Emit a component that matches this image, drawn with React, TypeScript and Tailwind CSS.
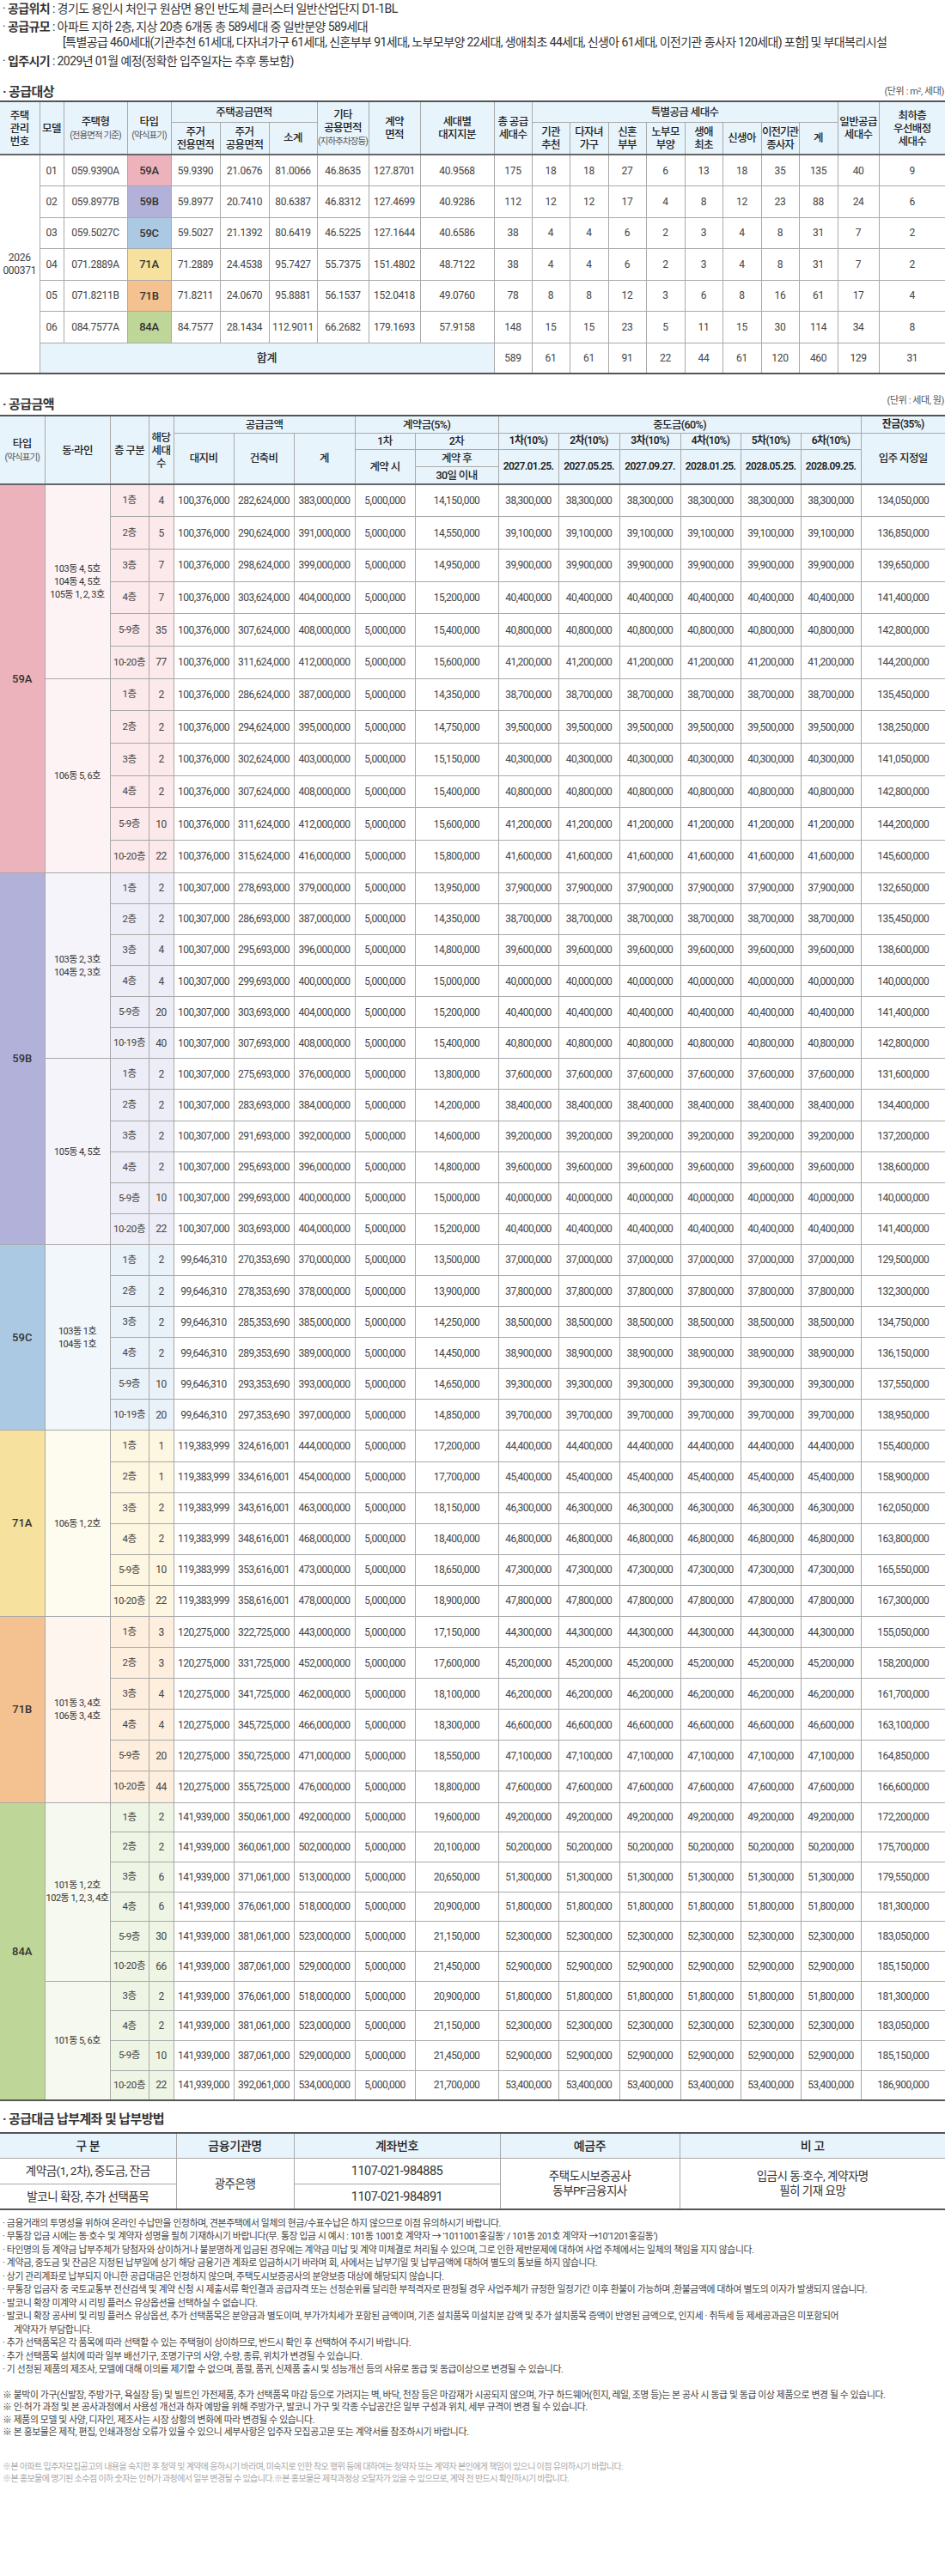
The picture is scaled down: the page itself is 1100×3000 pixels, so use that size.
import React from 'react';

type Row = [string, number, number];
type Group = { dong: string[]; rows: Row[] };
type TypeBlock = {
  type: string;
  land: number;
  strong: string;
  light: string;
  mid: string;
  rowH: string;
  groups: Group[];
};

const prices: TypeBlock[] = [
  {
    type: '59A',
    land: 100376000,
    strong: 'bg-[#ecb3bc]',
    light: 'bg-[#fdf3f4]',
    mid: 'bg-[#fbe9eb]',
    rowH: 'h-[37.7px]',
    groups: [
      {
        dong: ['103동 4, 5호', '104동 4, 5호', '105동 1, 2, 3호'],
        rows: [['1층', 4, 383], ['2층', 5, 391], ['3층', 7, 399], ['4층', 7, 404], ['5-9층', 35, 408], ['10-20층', 77, 412]],
      },
      {
        dong: ['106동 5, 6호'],
        rows: [['1층', 2, 387], ['2층', 2, 395], ['3층', 2, 403], ['4층', 2, 408], ['5-9층', 10, 412], ['10-20층', 22, 416]],
      },
    ],
  },
  {
    type: '59B',
    land: 100307000,
    strong: 'bg-[#b2b1da]',
    light: 'bg-[#f5f4fb]',
    mid: 'bg-[#ededf7]',
    rowH: 'h-[36.1px]',
    groups: [
      {
        dong: ['103동 2, 3호', '104동 2, 3호'],
        rows: [['1층', 2, 379], ['2층', 2, 387], ['3층', 4, 396], ['4층', 4, 400], ['5-9층', 20, 404], ['10-19층', 40, 408]],
      },
      {
        dong: ['105동 4, 5호'],
        rows: [['1층', 2, 376], ['2층', 2, 384], ['3층', 2, 392], ['4층', 2, 396], ['5-9층', 10, 400], ['10-20층', 22, 404]],
      },
    ],
  },
  {
    type: '59C',
    land: 99646310,
    strong: 'bg-[#acc9e3]',
    light: 'bg-[#f2f7fc]',
    mid: 'bg-[#e9f1f9]',
    rowH: 'h-[36.1px]',
    groups: [
      {
        dong: ['103동 1호', '104동 1호'],
        rows: [['1층', 2, 370], ['2층', 2, 378], ['3층', 2, 385], ['4층', 2, 389], ['5-9층', 10, 393], ['10-19층', 20, 397]],
      },
    ],
  },
  {
    type: '71A',
    land: 119383999,
    strong: 'bg-[#f6e29e]',
    light: 'bg-[#fefbef]',
    mid: 'bg-[#fdf6e0]',
    rowH: 'h-[36.1px]',
    groups: [
      {
        dong: ['106동 1, 2호'],
        rows: [['1층', 1, 444], ['2층', 1, 454], ['3층', 2, 463], ['4층', 2, 468], ['5-9층', 10, 473], ['10-20층', 22, 478]],
      },
    ],
  },
  {
    type: '71B',
    land: 120275000,
    strong: 'bg-[#f3c290]',
    light: 'bg-[#fef6ee]',
    mid: 'bg-[#fdeede]',
    rowH: 'h-[36.1px]',
    groups: [
      {
        dong: ['101동 3, 4호', '106동 3, 4호'],
        rows: [['1층', 3, 443], ['2층', 3, 452], ['3층', 4, 462], ['4층', 4, 466], ['5-9층', 20, 471], ['10-20층', 44, 476]],
      },
    ],
  },
  {
    type: '84A',
    land: 141939000,
    strong: 'bg-[#bed697]',
    light: 'bg-[#f5f9ef]',
    mid: 'bg-[#eef5e5]',
    rowH: 'h-[34.7px]',
    groups: [
      {
        dong: ['101동 1, 2호', '102동 1, 2, 3, 4호'],
        rows: [['1층', 2, 492], ['2층', 2, 502], ['3층', 6, 513], ['4층', 6, 518], ['5-9층', 30, 523], ['10-20층', 66, 529]],
      },
      {
        dong: ['101동 5, 6호'],
        rows: [['3층', 2, 518], ['4층', 2, 523], ['5-9층', 10, 529], ['10-20층', 22, 534]],
      },
    ],
  },
];

const supply = [
  ['01', '059.9390A', '59A', '59.9390', '21.0676', '81.0066', '46.8635', '127.8701', '40.9568', '175', '18', '18', '27', '6', '13', '18', '35', '135', '40', '9'],
  ['02', '059.8977B', '59B', '59.8977', '20.7410', '80.6387', '46.8312', '127.4699', '40.9286', '112', '12', '12', '17', '4', '8', '12', '23', '88', '24', '6'],
  ['03', '059.5027C', '59C', '59.5027', '21.1392', '80.6419', '46.5225', '127.1644', '40.6586', '38', '4', '4', '6', '2', '3', '4', '8', '31', '7', '2'],
  ['04', '071.2889A', '71A', '71.2889', '24.4538', '95.7427', '55.7375', '151.4802', '48.7122', '38', '4', '4', '6', '2', '3', '4', '8', '31', '7', '2'],
  ['05', '071.8211B', '71B', '71.8211', '24.0670', '95.8881', '56.1537', '152.0418', '49.0760', '78', '8', '8', '12', '3', '6', '8', '16', '61', '17', '4'],
  ['06', '084.7577A', '84A', '84.7577', '28.1434', '112.9011', '66.2682', '179.1693', '57.9158', '148', '15', '15', '23', '5', '11', '15', '30', '114', '34', '8'],
];
const typeColor: Record<string, string> = {
  '59A': 'bg-[#ecb3bc]',
  '59B': 'bg-[#b2b1da]',
  '59C': 'bg-[#acc9e3]',
  '71A': 'bg-[#f6e29e]',
  '71B': 'bg-[#f3c290]',
  '84A': 'bg-[#bed697]',
};
const totals = ['589', '61', '61', '91', '22', '44', '61', '120', '460', '129', '31'];

const fmt = (n: number) => n.toLocaleString('en-US');

const cell = 'border border-[#a9a9a9] p-0 text-center align-middle first:border-l-0 last:border-r-0';
const head = 'border border-[#a9a9a9] p-0 text-center align-middle first:border-l-0 last:border-r-0 font-medium text-[#222] text-[12.5px] leading-[15px] tracking-[-0.6px] whitespace-nowrap';
const small = 'text-[10.5px] font-normal text-[#555] tracking-[-0.9px]';

const notes = [
  '금융거래의 투명성을 위하여 온라인 수납만을 인정하며, 견본주택에서 일체의 현금/수표수납은 하지 않으므로 이점 유의하시기 바랍니다.',
  "무통장 입금 시에는 동·호수 및 계약자 성명을 필히 기재하시기 바랍니다(무. 통장 입금 시 예시 : 101동 1001호 계약자 → '1011001홍길동' / 101동 201호 계약자 →10'1201홍길동')",
  '타인명의 등 계약금 납부주체가 당첨자와 상이하거나 불분명하게 입금된 경우에는 계약금 미납 및 계약 미체결로 처리될 수 있으며, 그로 인한 제반문제에 대하여 사업 주체에서는 일체의 책임을 지지 않습니다.',
  '계약금, 중도금 및 잔금은 지정된 납부일에 상기 해당 금융기관 계좌로 입금하시기 바라며 회, 사에서는 납부기일 및 납부금액에 대하여 별도의 통보를 하지 않습니다.',
  '상기 관리계좌로 납부되지 아니한 공급대금은 인정하지 않으며, 주택도시보증공사의 분양보증 대상에 해당되지 않습니다.',
  '무통장 입금자 중 국토교통부 전산검색 및 계약 신청 시 제출서류 확인결과 공급자격 또는 선정순위를 달리한 부적격자로 판정될 경우 사업주체가 규정한 일정기간 이후 환불이 가능하며 ,환불금액에 대하여 별도의 이자가 발생되지 않습니다.',
  '발코니 확장 미계약 시 리빙 플러스 유상옵션을 선택하실 수 없습니다.',
  '발코니 확장 공사비 및 리빙 플러스 유상옵션, 추가 선택품목은 분양금과 별도이며, 부가가치세가 포함된 금액이며, 기존 설치품목 미설치분 감액 및 추가 설치품목 증액이 반영된 금액으로, 인지세 · 취득세 등 제세공과금은 미포함되어',
  '__계약자가 부담합니다.',
  '추가 선택품목은 각 품목에 따라 선택할 수 있는 주택형이 상이하므로, 반드시 확인 후 선택하여 주시기 바랍니다.',
  '추가 선택품목 설치에 따라 일부 배선기구, 조명기구의 사양, 수량, 종류, 위치가 변경될 수 있습니다.',
  '기 선정된 제품의 제조사, 모델에 대해 이의를 제기할 수 없으며, 품절, 품귀, 신제품 출시 및 성능개선 등의 사유로 동급 및 동급이상으로 변경될 수 있습니다.',
];

const remarks = [
  '붙박이 가구(신발장, 주방가구, 욕실장 등) 및 빌트인 가전제품, 추가 선택품목 마감 등으로 가려지는 벽, 바닥, 천장 등은 마감재가 시공되지 않으며, 가구 하드웨어(힌지, 레일, 조명 등)는 본 공사 시 동급 및 동급 이상 제품으로 변경 될 수 있습니다.',
  '인·허가 과정 및 본 공사과정에서 사용성 개선과 하자 예방을 위해 주방가구, 발코니 가구 및 각종 수납공간은 일부 구성과 위치, 세부 규격이 변경 될 수 있습니다.',
  '제품의 모델 및 사양, 디자인, 제조사는 시장 상황의 변화에 따라 변경될 수 있습니다.',
  '본 홍보물은 제작, 편집, 인쇄과정상 오류가 있을 수 있으니 세부사항은 입주자 모집공고문 또는 계약서를 참조하시기 바랍니다.',
];

function SupplyTable() {
  return (
    <table className="w-full table-fixed border-collapse border-y-2 border-[#555]">
      <colgroup>
        {[46, 28, 74, 51, 57, 57, 56, 60, 60, 86, 44, 44, 45, 44, 45, 44, 45, 44, 45, 48, 77].map((w, i) => (
          <col key={i} style={{ width: w }} />
        ))}
      </colgroup>
      <thead className="bg-[#e8f4fc] border-b-2 border-[#666]">
        <tr className="h-[24px]">
          <th rowSpan={2} className={head}>주택<br />관리<br />번호</th>
          <th rowSpan={2} className={head}>모델</th>
          <th rowSpan={2} className={head}>주택형<br /><span className={small}>(전용면적 기준)</span></th>
          <th rowSpan={2} className={head}>타입<br /><span className={small}>(약식표기)</span></th>
          <th colSpan={3} className={head}>주택공급면적</th>
          <th rowSpan={2} className={head}>기타<br />공용면적<br /><span className={small}>(지하주차장등)</span></th>
          <th rowSpan={2} className={head}>계약<br />면적</th>
          <th rowSpan={2} className={head}>세대별<br />대지지분</th>
          <th rowSpan={2} className={head}>총 공급<br />세대수</th>
          <th colSpan={8} className={head}>특별공급 세대수</th>
          <th rowSpan={2} className={head}>일반공급<br />세대수</th>
          <th rowSpan={2} className={head}>최하층<br />우선배정<br />세대수</th>
        </tr>
        <tr className="h-[38px]">
          <th className={head}>주거<br />전용면적</th>
          <th className={head}>주거<br />공용면적</th>
          <th className={head}>소계</th>
          <th className={head}>기관<br />추천</th>
          <th className={head}>다자녀<br />가구</th>
          <th className={head}>신혼<br />부부</th>
          <th className={head}>노부모<br />부양</th>
          <th className={head}>생애<br />최초</th>
          <th className={head}>신생아</th>
          <th className={`${head} tracking-[-1px]`}>이전기관<br />종사자</th>
          <th className={head}>계</th>
        </tr>
      </thead>
      <tbody className="text-[12px] tracking-[-0.3px] text-[#444]">
        {supply.map((r, i) => (
          <tr key={r[0]} className="h-[36.5px]">
            {i === 0 && (
              <td rowSpan={7} className={`${cell} leading-[15px]`}>
                2026
                <br />
                000371
              </td>
            )}
            {r.map((v, j) =>
              j === 2 ? (
                <td key={j} className={`${cell} ${typeColor[v]} text-[13px] font-medium text-[#333]`}>
                  {v}
                </td>
              ) : (
                <td key={j} className={cell}>
                  {v}
                </td>
              ),
            )}
          </tr>
        ))}
        <tr className="h-[36px]">
          <td colSpan={9} className={`${cell} bg-[#e8f4fc] text-[13px] font-medium text-[#222]`}>
            합계
          </td>
          {totals.map((v, j) => (
            <td key={j} className={cell}>
              {v}
            </td>
          ))}
        </tr>
      </tbody>
    </table>
  );
}

function PriceTable() {
  const dates = ['2027.01.25.', '2027.05.25.', '2027.09.27.', '2028.01.25.', '2028.05.25.', '2028.09.25.'];
  const h2 = `${head} font-semibold text-[12px] tracking-[-0.6px]`;
  return (
    <table className="w-full table-fixed border-collapse border-y-2 border-[#555]">
      <colgroup>
        {[52, 76, 45, 29, 70, 70, 71, 70, 97, 70, 71, 71, 70, 70, 70, 98].map((w, i) => (
          <col key={i} style={{ width: w }} />
        ))}
      </colgroup>
      <thead className="bg-[#e8f4fc] border-b-2 border-[#666]">
        <tr className="h-[20px]">
          <th rowSpan={4} className={head}>타입<br /><span className={small}>(약식표기)</span></th>
          <th rowSpan={4} className={head}>동·라인</th>
          <th rowSpan={4} className={head}>층 구분</th>
          <th rowSpan={4} className={`${head} leading-[14px]`}>해당<br />세대<br />수</th>
          <th colSpan={3} className={head}>공급금액</th>
          <th colSpan={2} className={head}>계약금(5%)</th>
          <th colSpan={6} className={head}>중도금(60%)</th>
          <th className={h2}>잔금(35%)</th>
        </tr>
        <tr className="h-[19px]">
          <th rowSpan={3} className={head}>대지비</th>
          <th rowSpan={3} className={head}>건축비</th>
          <th rowSpan={3} className={head}>계</th>
          <th className={head}>1차</th>
          <th className={head}>2차</th>
          {[1, 2, 3, 4, 5, 6].map((n) => (
            <th key={n} className={h2}>
              {n}차(10%)
            </th>
          ))}
          <th rowSpan={3} className={head}>입주 지정일</th>
        </tr>
        <tr className="h-[20px]">
          <th rowSpan={2} className={head}>계약 시</th>
          <th className={head}>계약 후</th>
          {dates.map((d) => (
            <th key={d} rowSpan={2} className={h2}>
              {d}
            </th>
          ))}
        </tr>
        <tr className="h-[21px]">
          <th className={head}>30일 이내</th>
        </tr>
      </thead>
      <tbody className="text-[12px] tracking-[-0.5px] text-[#444]">
        {prices.map((t) => {
          const count = t.groups.reduce((s, g) => s + g.rows.length, 0);
          return t.groups.map((g, gi) =>
            g.rows.map((r, ri) => {
              const total = r[2] * 1000000;
              const mid = fmt(total * 0.1);
              return (
                <tr key={`${t.type}-${gi}-${ri}`} className={t.rowH}>
                  {gi === 0 && ri === 0 && (
                    <td rowSpan={count} className={`${cell} ${t.strong} text-[13px] font-medium text-[#333] tracking-normal`}>
                      {t.type}
                    </td>
                  )}
                  {ri === 0 && (
                    <td rowSpan={g.rows.length} className={`${cell} ${t.light} text-[11px] leading-[15px] tracking-[-0.5px] text-[#333] whitespace-nowrap`}>
                      {g.dong.map((d) => (
                        <div key={d}>{d}</div>
                      ))}
                    </td>
                  )}
                  <td className={`${cell} ${t.mid} text-[11.5px] tracking-[-0.4px] whitespace-nowrap`}>{r[0]}</td>
                  <td className={`${cell} ${t.mid}`}>{r[1]}</td>
                  <td className={cell}>{fmt(t.land)}</td>
                  <td className={cell}>{fmt(total - t.land)}</td>
                  <td className={cell}>{fmt(total)}</td>
                  <td className={cell}>5,000,000</td>
                  <td className={cell}>{fmt(total * 0.05 - 5000000)}</td>
                  <td className={cell}>{mid}</td>
                  <td className={cell}>{mid}</td>
                  <td className={cell}>{mid}</td>
                  <td className={cell}>{mid}</td>
                  <td className={cell}>{mid}</td>
                  <td className={cell}>{mid}</td>
                  <td className={cell}>{fmt(total * 0.35)}</td>
                </tr>
              );
            }),
          );
        })}
      </tbody>
    </table>
  );
}

function AccountTable() {
  const h3 = 'border border-[#a9a9a9] p-0 text-center align-middle first:border-l-0 last:border-r-0 font-medium text-[#222] text-[14px] tracking-[-0.4px]';
  const c3 = 'border border-[#a9a9a9] p-0 text-center align-middle first:border-l-0 last:border-r-0 text-[#333] text-[13.5px] tracking-[-0.5px] leading-[17px]';
  return (
    <table className="w-full table-fixed border-collapse border-y-2 border-[#555]">
      <colgroup>
        {[205, 137, 240, 209, 309].map((w, i) => (
          <col key={i} style={{ width: w }} />
        ))}
      </colgroup>
      <thead className="bg-[#e8f4fc]">
        <tr className="h-[30px]">
          <th className={h3}>구 분</th>
          <th className={h3}>금융기관명</th>
          <th className={h3}>계좌번호</th>
          <th className={h3}>예금주</th>
          <th className={h3}>비 고</th>
        </tr>
      </thead>
      <tbody>
        <tr className="h-[30px]">
          <td className={c3}>계약금(1, 2차), 중도금, 잔금</td>
          <td rowSpan={2} className={c3}>광주은행</td>
          <td className={`${c3} text-[14.5px] tracking-[-0.3px]`}>1107-021-984885</td>
          <td rowSpan={2} className={c3}>
            주택도시보증공사
            <br />
            동부PF금융지사
          </td>
          <td rowSpan={2} className={c3}>
            입금시 동·호수, 계약자명
            <br />
            필히 기재 요망
          </td>
        </tr>
        <tr className="h-[29px]">
          <td className={c3}>발코니 확장, 추가 선택품목</td>
          <td className={`${c3} text-[14.5px] tracking-[-0.3px]`}>1107-021-984891</td>
        </tr>
      </tbody>
    </table>
  );
}

export default function App() {
  return (
    <div className="w-[1100px] bg-white text-[#333] font-[family-name:Roboto,'Noto_Sans_CJK_KR',sans-serif]">
      {/* 개요 */}
      <div className="pl-[3px] text-[14px] tracking-[-0.6px] text-[#333] whitespace-nowrap">
        <div className="leading-[21px]">
          · <span className="font-bold">공급위치</span> : 경기도 용인시 처인구 원삼면 용인 반도체 클러스터 일반산업단지 D1-1BL
        </div>
        <div className="leading-[20px]">
          · <span className="font-bold">공급규모</span> : 아파트 지하 2층, 지상 20층 6개동 총 589세대 중 일반분양 589세대
        </div>
        <div className="leading-[16px] pl-[70px]">
          [특별공급 460세대(기관추천 61세대, 다자녀가구 61세대, 신혼부부 91세대, 노부모부양 22세대, 생애최초 44세대, 신생아 61세대, 이전기관 종사자 120세대) 포함] 및 부대복리시설
        </div>
        <div className="leading-[22px] mt-[3px]">
          · <span className="font-bold">입주시기</span> : 2029년 01월 예정(정확한 입주일자는 추후 통보함)
        </div>
      </div>

      <div className="mt-[14px] flex items-end justify-between pl-[3px] h-[21px]">
        <div className="text-[15px] font-bold tracking-[-0.6px] leading-[20px]">· 공급대상</div>
        <div className="text-[11px] tracking-[-0.4px] text-[#555] leading-[20px] pr-[1px]">
          (단위 : m<sup className="text-[7px]">2</sup>, 세대)
        </div>
      </div>
      <SupplyTable />

      <div className="mt-[22px] flex items-end justify-between pl-[3px] h-[25px]">
        <div className="text-[15px] font-bold tracking-[-0.6px] leading-[24px]">· 공급금액</div>
        <div className="text-[11px] tracking-[-0.4px] text-[#555] leading-[24px] pr-[1px] pb-[4px]">(단위 : 세대, 원)</div>
      </div>
      <PriceTable />

      <div className="mt-[8px] pl-[3px] h-[28px] text-[15px] font-bold tracking-[-0.6px] leading-[26px]">
        · 공급대금 납부계좌 및 납부방법
      </div>
      <AccountTable />

      <div className="mt-[8px] pl-[3px] text-[10.8px] tracking-[-0.35px] text-[#444] leading-[15.5px] whitespace-nowrap">
        {notes.map((n, i) =>
          n.startsWith('__') ? (
            <div key={i} className="pl-[13px]">
              {n.slice(2)}
            </div>
          ) : (
            <div key={i}>· {n}</div>
          ),
        )}
      </div>

      <div className="mt-[15px] pl-[3px] text-[10.8px] tracking-[-0.35px] text-[#444] leading-[14.3px] whitespace-nowrap">
        {remarks.map((n, i) => (
          <div key={i}>※ {n}</div>
        ))}
      </div>

      <div className="mt-[26px] pl-[3px] text-[10px] tracking-[-0.6px] text-[#aaa] leading-[14px] whitespace-nowrap">
        <div>※본 아파트 입주자모집공고의 내용을 숙지한 후 청약 및 계약에 응하시기 바라며, 미숙지로 인한 착오 행위 등에 대하여는 청약자 또는 계약자 본인에게 책임이 있으니 이점 유의하시기 바랍니다.</div>
        <div>※본 홍보물에 명기된 소수점 이하 숫자는 인허가 과정에서 일부 변경될 수 있습니다.※본 홍보물은 제작과정상 오탈자가 있을 수 있으므로, 계약 전 반드시 확인하시기 바랍니다.</div>
      </div>
      <div className="h-[100px]" />
    </div>
  );
}
